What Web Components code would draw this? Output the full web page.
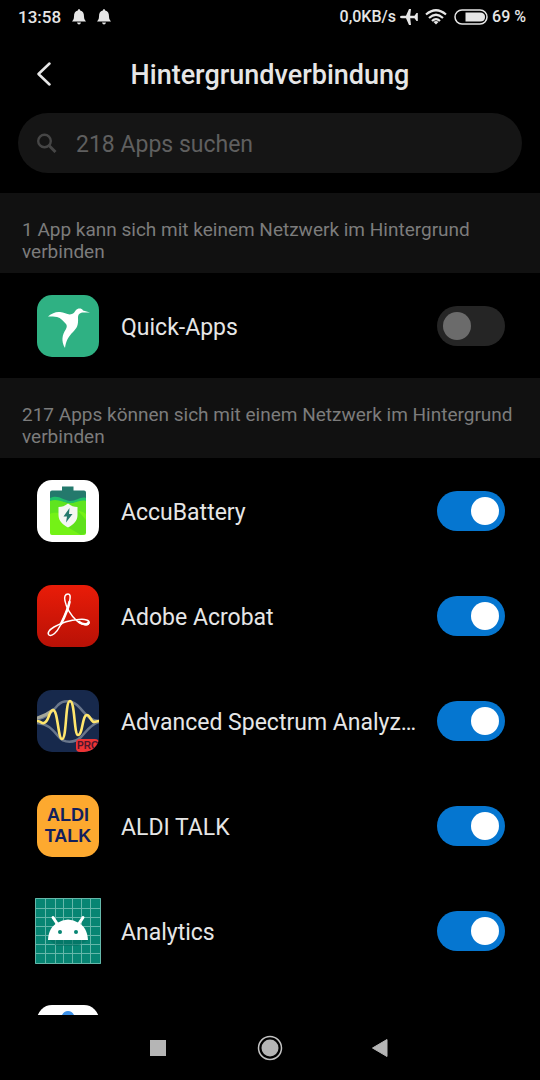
<!DOCTYPE html>
<html lang="de">
<head>
<meta charset="utf-8">
<meta name="viewport" content="width=device-width, initial-scale=1">
<title>Hintergrundverbindung</title>
<style>
    html, body {
        margin: 0;
        height: 100%;
        background: #000;
        color: #e6e6e6;
        font-family: Roboto, "Noto Sans", sans-serif;
    }
    body {
        display: flex;
        flex-direction: column;
    }
    main {
        flex: 1;
        min-height: 0;
        overflow: hidden;
    }
</style>
</head>
<body>
    <status-bar time="13:58" speed="0,0KB/s" battery="69 %"></status-bar>
    <page-header>Hintergrundverbindung</page-header>
    <search-box placeholder="218 Apps suchen"></search-box>
    <main>
        <app-section>
            <span slot="title">1 App kann sich mit keinem Netzwerk im Hintergrund verbinden</span>
            <app-row icon="quick">Quick-Apps</app-row>
        </app-section>
        <app-section>
            <span slot="title">217 Apps können sich mit einem Netzwerk im Hintergrund verbinden</span>
            <app-row icon="battery" checked>AccuBattery</app-row>
            <app-row icon="acrobat" checked>Adobe Acrobat</app-row>
            <app-row icon="spectrum" checked>Advanced Spectrum Analyzer PRO</app-row>
            <app-row icon="aldi" checked>ALDI TALK</app-row>
            <app-row icon="analytics" checked>Analytics</app-row>
            <app-row icon="next" checked></app-row>
        </app-section>
    </main>
    <nav-bar></nav-bar>

<script>
const appIcons = {
    quick: `
        <rect x="2" y="2" width="62" height="62" rx="15" fill="#2fb183"/>
        <path fill="#fff" d="M13 23.500C17 20 21 18.500 25 19C30 19.500 33 22.500 37 21C40 20 40 17 42.500 16C44.500 15 47 15.500 48 17.500L55 19.500L47.500 19.500C44 20 43 22 43 25C43.500 32 42 35 38 39C33 44 31 48 30 55C26 48 27 42 31 36C32 34 32 32 31 31C28 28 26 25 22 24C19 23.500 17 23.500 13 23.500Z"/>`,
    battery: `
        <rect x="2" y="2" width="62" height="62" rx="15" fill="#fff"/>
        <path fill="#24796c" d="M27 8.500H38.500V12.500H49Q51 12.500 51 14.500V25H15V14.500Q15 12.500 17 12.500H27Z"/>
        <path fill="#5fe41f" d="M15 22C22 18 28 24 35 25C42 24 46 20 51 22V42H15Z"/>
        <path fill="#74f216" d="M15 36C21 33 27 37 32 35C39 31 46 32 51 36V55Q51 57 49 57H17Q15 57 15 55Z"/>
        <path fill="#1fbf6b" d="M15 20C23 16 28 22 35 23C42 23 46 18 51 20V23C45 21 40 26 34 25C27 24 22 20 15 23Z"/>
        <path fill="#40c822" d="M40 29L51 42V55L46 57L29 47Z" opacity=".4"/>
        <path fill="#f4f6f3" d="M33 25.500C36 28 39 29 42.500 29V37C42.500 43 38 47 33 49.500C28 47 23.500 43 23.500 37V29C27 29 30 28 33 25.500Z"/>
        <path fill="#24796c" d="M34.500 30L28.500 38.500H32L31 44.500L37.500 36H34Z"/>`,
    acrobat: `
        <defs><linearGradient id="red" x2="0" y2="1"><stop stop-color="#e91c08"/><stop offset="1" stop-color="#b81106"/></linearGradient></defs>
        <rect x="2" y="2" width="62" height="62" rx="15" fill="url(#red)"/>
        <g fill="none" stroke="#fff" stroke-linecap="round" stroke-linejoin="round">
            <path stroke-width="1.500" d="M33 11C30 11 29 14 30 18C31 24 36 33 42 38C47 42 53 43 54 40C55 37 50 36 44 36.500C36 37 26 40 19 44C14 47 12 50 14 52C17 54 22 49 25 43C30 33 34 22 35 16C35.500 13 35 11 33 11Z"/>
            <path stroke-width="2.600" d="M34.500 19C33 26 30 33 26 41M44 39C48 42 53 42 53.500 39.500"/>
        </g>`,
    spectrum: `
        <defs><clipPath id="tile"><rect x="2" y="2" width="62" height="62" rx="15"/></clipPath></defs>
        <g clip-path="url(#tile)">
            <rect x="2" y="2" width="62" height="62" fill="#17294c"/>
            <g fill="none" stroke-linecap="round" stroke-linejoin="round">
                <path stroke="#69768b" stroke-width="2.500" d="M2 31C11 30 17 24 23 17C28 12 36 12 42 17C50 24 52 32 64 33M2 35C13 36 17 41 23 48C29 56 40 55 46 49C51 44 56 36 64 34"/>
                <path stroke="#a5a799" stroke-width="3" d="M2 30C9 28 13 26 18 22"/>
                <path stroke="#ffe66d" stroke-width="2.600" d="M2 33C7 33 6 36 9 35C14 34 14 22 18 22C23 22 23 51 27 51C32 51 30 13 35 13C40 13 39 47 43 47C48 47 47 27 52 27C55 27 56 34 59 34L64 33"/>
            </g>
            <rect x="41" y="51" width="23" height="13" rx="4" fill="#ed3334"/>
            <text x="42" y="61" font-family="Liberation Sans, sans-serif" font-size="10" font-weight="700" fill="#50162c">PRO</text>
        </g>`,
    aldi: `
        <rect x="2" y="2" width="62" height="62" rx="15" fill="#fda92f"/>
        <g font-family="Liberation Sans, sans-serif" font-size="18" font-weight="700" fill="#131f5c" text-anchor="middle">
            <text x="33" y="28">ALDI</text>
            <text x="33" y="49">TALK</text>
        </g>`,
    analytics: `
        <rect width="66" height="66" fill="#078573"/>
        <path fill="none" stroke="#65b7aa" stroke-width="1" d="M10.500 0V66M20.500 0V66M28.500 0V66M37.500 0V66M46.500 0V66M55.500 0V66M0 10.500H66M0 19.500H66M0 28.500H66M0 37.500H66M0 46.500H66M0 55.500H66M.5 .5H65.500V65.500H.5Z"/>
        <path fill="#046f60" d="M14 42H53L43 48H22Z" opacity=".6"/>
        <path fill="#fff" d="M13 42C13.500 33 17 28 22 25Q33 18 44 25C49 28 52.500 33 53 42Z"/>
        <path stroke="#fff" stroke-width="3" stroke-linecap="round" d="M18 19.500L23 27M48 19.500L43 27"/>
        <circle cx="25" cy="34" r="2" fill="#078573"/>
        <circle cx="41" cy="34" r="2" fill="#078573"/>`,
    next: `
        <rect x="2" y="2" width="62" height="62" rx="15" fill="#fff"/>
        <path fill="#3d91e8" d="M33 8Q37 8 39 12L54 48L48 54L33 46L18 54L12 48L27 12Q29 8 33 8Z"/>`
};

class StatusBar extends HTMLElement {
    constructor() {
        super();
        const bell = `<svg width="14" height="16" viewBox="0 0 14 16"><path d="M7 0Q8 0 8.200 1.500C11 2 12 4.500 12 7.500C12 10 13 11 14 12.500H0C1 11 2 10 2 7.500C2 4.500 3 2 5.800 1.500Q6 0 7 0ZM5 13.500H9Q8.500 15.500 7 15.500Q5.500 15.500 5 13.500Z"/></svg>`;
        this.attachShadow({mode: "open"});
        this.shadowRoot.innerHTML = `
            <style>
                :host {
                    display: flex;
                    justify-content: space-between;
                    align-items: center;
                    height: 34px;
                    padding: 0 14px 0 18px;
                    font-size: 17px;
                    font-weight: 500;
                    line-height: 20px;
                }
                svg {
                    fill: currentColor;
                }
                div {
                    display: flex;
                    align-items: center;
                }
                .left {
                    gap: 11px;
                }
                .right {
                    gap: 4px;
                    font-size: 16px;
                }
                .wifi {
                    padding: 0 3px;
                }
            </style>
            <div class="left"><span id="time"></span>${bell}${bell}</div>
            <div class="right">
                <span id="speed"></span>
                <svg width="18" height="18" viewBox="0 0 18 18"><path d="M0 9Q0 7.800 2 7.800H6L9 1H11L10.200 7.800H14.500L16.500 5H17.800V13H16.500L14.500 10.200H10.200L11 17H9L6 10.200H2Q0 10.200 0 9Z"/></svg>
                <svg class="wifi" width="22" height="16" viewBox="0 0 22 16"><g fill="none" stroke="currentColor" stroke-width="2.200"><path d="M1 5.500Q11 -3 21 5.500M4 9Q11 2.500 18 9M7 12Q11 8 15 12"/></g><path d="M8.500 13Q11 11 13.500 13L11 15.500Z"/></svg>
                <svg width="34" height="16" viewBox="0 0 34 16"><rect x="1" y="1" width="32" height="14" rx="7" fill="none" stroke="currentColor" stroke-width="1.500"/><path d="M11.500 3.500H26Q31 3.500 31 8T26 12.500H11.500Z"/></svg>
                <span id="battery"></span>
            </div>
        `;
        for (const name of ["time", "speed", "battery"]) {
            this.shadowRoot.getElementById(name).textContent = this.getAttribute(name);
        }
    }
}

class PageHeader extends HTMLElement {
    constructor() {
        super();
        this.attachShadow({mode: "open"});
        this.shadowRoot.innerHTML = `
            <style>
                :host {
                    display: grid;
                    grid-template-columns: 52px 1fr 52px;
                    align-items: center;
                    height: 79px;
                    padding: 0 18px;
                }
                button {
                    display: flex;
                    justify-content: center;
                    padding: 8px 0;
                    border: none;
                    background: none;
                    color: inherit;
                }
                h1 {
                    margin: 0;
                    padding-top: 2px;
                    font-size: 27px;
                    font-weight: 500;
                    line-height: 32px;
                    text-align: center;
                }
            </style>
            <button aria-label="Zurück">
                <svg width="16" height="24" viewBox="0 0 16 24"><path d="M13.500 1.500L2.500 12L13.500 22.500" fill="none" stroke="currentColor" stroke-width="2.500" stroke-linecap="round" stroke-linejoin="round"/></svg>
            </button>
            <h1><slot></slot></h1>
        `;
    }
}

class SearchBox extends HTMLElement {
    constructor() {
        super();
        this.attachShadow({mode: "open"});
        this.shadowRoot.innerHTML = `
            <style>
                :host {
                    display: block;
                    margin: 0 18px 20px;
                }
                label {
                    display: flex;
                    align-items: center;
                    gap: 19px;
                    height: 60px;
                    padding: 0 19px;
                    border-radius: 30px;
                    background: #151515;
                }
                svg {
                    flex: none;
                }
                input {
                    flex: 1;
                    min-width: 0;
                    padding: 2px 0 0;
                    border: none;
                    outline: none;
                    background: none;
                    color: #e6e6e6;
                    font: inherit;
                    font-size: 23px;
                }
                input::placeholder {
                    color: #5f5f5f;
                }
            </style>
            <label>
                <svg width="20" height="20" viewBox="0 0 20 20" fill="none" stroke="#464646"><circle cx="7.500" cy="8" r="6.300" stroke-width="2.400"/><path d="M12 12.500L18.500 19" stroke-width="3"/></svg>
                <input type="text" aria-label="Apps suchen">
            </label>
        `;
        this.shadowRoot.querySelector("input").placeholder = this.getAttribute("placeholder");
    }
}

class AppSection extends HTMLElement {
    constructor() {
        super();
        this.attachShadow({mode: "open"});
        this.shadowRoot.innerHTML = `
            <style>
                :host {
                    display: block;
                }
                h2 {
                    margin: 0;
                    padding: 26px 22px 10px;
                    background: #111;
                    color: #7c7c7c;
                    font-size: 19px;
                    font-weight: 400;
                    line-height: 22px;
                }
            </style>
            <h2><slot name="title"></slot></h2>
            <slot></slot>
        `;
    }
}

class AppRow extends HTMLElement {
    constructor() {
        super();
        this.attachShadow({mode: "open"});
        this.shadowRoot.innerHTML = `
            <style>
                :host {
                    display: block;
                }
                label {
                    display: flex;
                    align-items: center;
                    gap: 20px;
                    height: 105px;
                    padding: 0 35px;
                }
                svg {
                    flex: none;
                }
                span {
                    flex: 1;
                    min-width: 0;
                    padding-top: 4px;
                    overflow: hidden;
                    white-space: nowrap;
                    text-overflow: ellipsis;
                    font-size: 23px;
                    line-height: 30px;
                }
                input {
                    appearance: none;
                    flex: none;
                    display: flex;
                    align-items: center;
                    box-sizing: border-box;
                    width: 68px;
                    height: 40px;
                    margin: 0;
                    padding: 0 6px;
                    border-radius: 20px;
                    background: #252525;
                }
                input::before {
                    content: "";
                    width: 28px;
                    height: 28px;
                    border-radius: 50%;
                    background: #6b6b6b;
                }
                input:checked {
                    justify-content: flex-end;
                    background: #0576d0;
                }
                input:checked::before {
                    background: #fff;
                }
            </style>
            <label>
                <svg width="66" height="66" viewBox="0 0 66 66">${appIcons[this.getAttribute("icon")]}</svg>
                <span><slot></slot></span>
                <input type="checkbox" role="switch">
            </label>
        `;
        this.shadowRoot.querySelector("input").checked = this.hasAttribute("checked");
    }
}

class NavBar extends HTMLElement {
    constructor() {
        super();
        this.attachShadow({mode: "open"});
        this.shadowRoot.innerHTML = `
            <style>
                :host {
                    display: flex;
                    justify-content: center;
                    align-items: center;
                    gap: 71px;
                    height: 65px;
                }
                button {
                    display: flex;
                    justify-content: center;
                    width: 40px;
                    padding: 0;
                    border: none;
                    background: none;
                }
            </style>
            <button aria-label="Letzte Apps"><svg width="26" height="26" viewBox="0 0 26 26"><rect x="4" y="5" width="16" height="16" fill="#b5b5b5"/></svg></button>
            <button aria-label="Startseite"><svg width="26" height="26" viewBox="0 0 26 26"><circle cx="13" cy="13" r="11.500" fill="none" stroke="#c4c4c4" stroke-width="1.500"/><circle cx="13" cy="13" r="8.500" fill="#b5b5b5"/></svg></button>
            <button aria-label="Zurück"><svg width="26" height="26" viewBox="0 0 26 26"><path d="M19 4.500V21.500L4.500 13Z" fill="#b5b5b5" stroke="#b5b5b5" stroke-linejoin="round"/></svg></button>
        `;
    }
}

customElements.define("status-bar", StatusBar);
customElements.define("page-header", PageHeader);
customElements.define("search-box", SearchBox);
customElements.define("app-section", AppSection);
customElements.define("app-row", AppRow);
customElements.define("nav-bar", NavBar);
</script>
</body>
</html>
